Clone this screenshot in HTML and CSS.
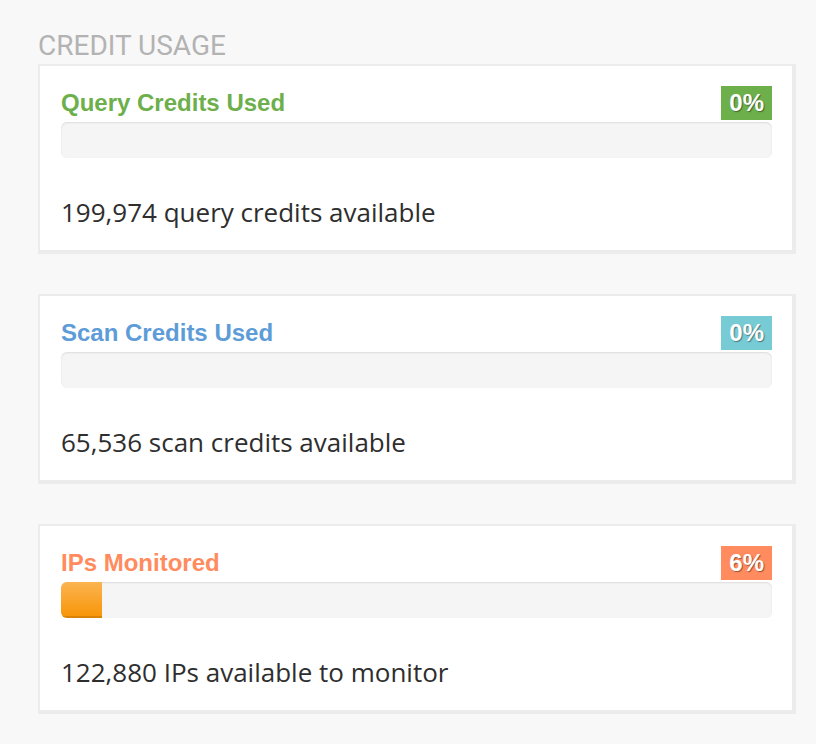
FILE: index.html
```html
<!DOCTYPE html>
<html>
<head>
<meta charset="utf-8">
<link rel="stylesheet" href="styles.css">
</head>
<body>
<div class="page">
  <h2 class="section-title">CREDIT USAGE</h2>
  <div class="cards">
    <div class="card">
      <div class="card-head">
        <span class="card-title title-green">Query Credits Used</span>
        <span class="badge badge-green">0%</span>
      </div>
      <div class="bar"><div class="bar-fill" style="width:0%"></div></div>
      <p class="desc">199,974 query credits available</p>
    </div>
    <div class="card">
      <div class="card-head">
        <span class="card-title title-blue">Scan Credits Used</span>
        <span class="badge badge-teal">0%</span>
      </div>
      <div class="bar"><div class="bar-fill" style="width:0%"></div></div>
      <p class="desc">65,536 scan credits available</p>
    </div>
    <div class="card">
      <div class="card-head">
        <span class="card-title title-orange">IPs Monitored</span>
        <span class="badge badge-orange">6%</span>
      </div>
      <div class="bar"><div class="bar-fill" style="width:5.8%"></div></div>
      <p class="desc">122,880 IPs available to monitor</p>
    </div>
  </div>
</div>
</body>
</html>
```

FILE: styles.css
```css
html, body {
  margin: 0;
  padding: 0;
  background: #f8f8f8;
}

.page {
  padding: 32px 20px 0 38px;
}

.section-title {
  margin: 0 0 4px 0;
  font-family: Roboto, "Liberation Sans", sans-serif;
  font-weight: 400;
  font-size: 28px;
  line-height: 28px;
  color: #b3b3b3;
  letter-spacing: 0;
}

.cards {
  display: flex;
  flex-direction: column;
  gap: 40px;
}

.card {
  background: #ffffff;
  border-style: solid;
  border-color: #ececec;
  border-width: 2px 4px 4px 2px;
  padding: 20px 20px 20px 21px;
}

.card-head {
  display: flex;
  justify-content: space-between;
  align-items: center;
}

.card-title {
  font-family: "Liberation Sans", Arial, sans-serif;
  font-weight: 700;
  font-size: 24px;
  line-height: 34px;
}

.title-green { color: #6daf4b; }
.title-blue { color: #5e9cd7; }
.title-orange { color: #ff8b5e; }

.badge {
  font-family: "Liberation Sans", Arial, sans-serif;
  font-weight: 700;
  font-size: 24px;
  line-height: 34px;
  height: 34px;
  padding: 0 8px;
  color: #ffffff;
  text-shadow: 1px 1px 1px rgba(0, 0, 0, 0.4);
}

.badge-green { background: #6daf4b; }
.badge-teal { background: #76cbd5; }
.badge-orange { background: #ff8b5e; }

.bar {
  margin-top: 2px;
  height: 36px;
  border-radius: 6px;
  background: #f5f5f5;
  box-shadow: inset 0 1px 2px rgba(0, 0, 0, 0.1);
  overflow: hidden;
  display: flex;
}

.bar-fill {
  height: 100%;
  background: linear-gradient(to bottom, #fbb450, #f89406);
  box-shadow: inset 0 -2px 0 rgba(0, 0, 0, 0.12);
}

.desc {
  margin: 36px 0 0 0;
  font-family: "Open Sans", "Liberation Sans", sans-serif;
  font-size: 26px;
  line-height: 36px;
  color: #2e2e2e;
}
```
